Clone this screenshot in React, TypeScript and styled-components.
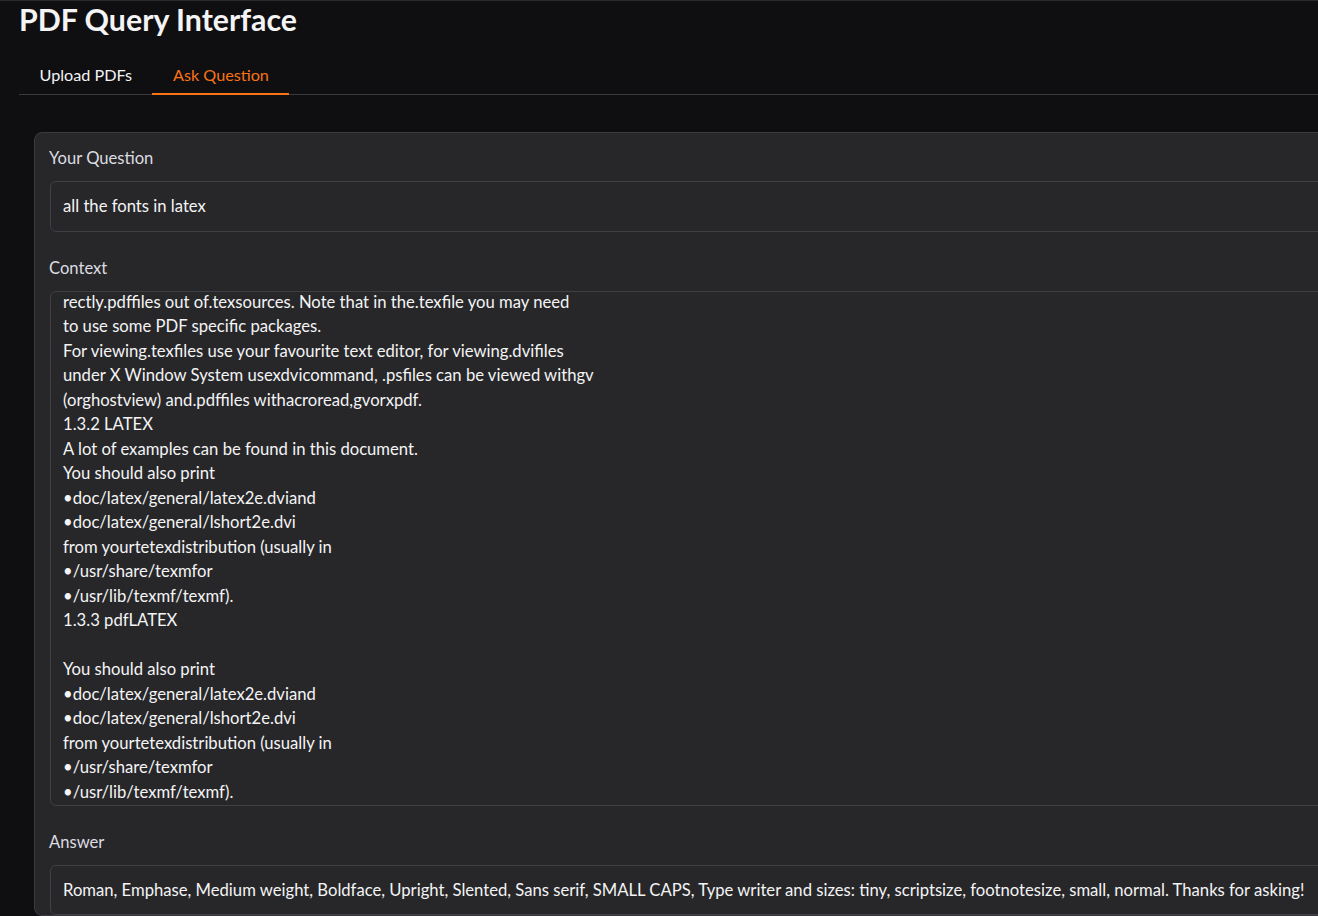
import React from "react";
import styled, { createGlobalStyle } from "styled-components";

const GlobalStyle = createGlobalStyle`
  html, body {
    margin: 0;
    padding: 0;
    background: #0f0f11;
    overflow: hidden;
  }
  body {
    border-top: 1px solid #2a2a2e;
    font-family: Lato, "Noto Sans", sans-serif;
    color: #f4f4f5;
  }
`;

const Page = styled.div`
  width: 1420px;
  padding: 0 0 0 19px;
  box-sizing: border-box;
`;

const Title = styled.h1`
  margin: 0;
  font-size: 30.3px;
  line-height: 36px;
  font-weight: 700;
  color: #f4f4f5;
`;

const TabBar = styled.div`
  display: flex;
  margin-top: 21px;
  border-bottom: 1px solid #3a3a3f;
`;

const Tab = styled.button<{ $active?: boolean }>`
  background: none;
  border: none;
  padding: 0 20.5px 2px;
  height: 37px;
  margin-bottom: -1px;
  font-family: inherit;
  font-size: 16.2px;
  font-weight: 400;
  color: ${(p) => (p.$active ? "#f97316" : "#f4f4f5")};
  border-bottom: 2px solid ${(p) => (p.$active ? "#f97316" : "transparent")};
  cursor: pointer;
`;

const Panel = styled.div`
  margin: 37px 0 0 15px;
  background: #27272a;
  border: 1px solid #3a3a3f;
  border-radius: 8px;
  padding: 15px 14px 0;
  display: flex;
  flex-direction: column;
  gap: 26px;
`;

const Field = styled.div`
  display: flex;
  flex-direction: column;
  gap: 13px;
`;

const Label = styled.div`
  font-size: 16.6px;
  line-height: 20px;
  color: #dcdce0;
`;

const Box = styled.div<{ $height?: number }>`
  margin-left: 1px;
  border: 1px solid #3f3f46;
  border-radius: 6px;
  background: #27272a;
  padding: ${(p) => (p.$height ? "0 12px" : "12px")};
  font-size: 16.65px;
  line-height: 24.5px;
  color: #f4f4f5;
  height: ${(p) => (p.$height ? `${p.$height}px` : "auto")};
  overflow: hidden;
`;

const Scroll = styled.div`
  margin-top: -2px;
  white-space: pre;
`;

const contextLines = [
  "rectly.pdffiles out of.texsources. Note that in the.texfile you may need",
  "to use some PDF specific packages.",
  "For viewing.texfiles use your favourite text editor, for viewing.dvifiles",
  "under X Window System usexdvicommand, .psfiles can be viewed withgv",
  "(orghostview) and.pdffiles withacroread,gvorxpdf.",
  "1.3.2 LATEX",
  "A lot of examples can be found in this document.",
  "You should also print",
  "•doc/latex/general/latex2e.dviand",
  "•doc/latex/general/lshort2e.dvi",
  "from yourtetexdistribution (usually in",
  "•/usr/share/texmfor",
  "•/usr/lib/texmf/texmf).",
  "1.3.3 pdfLATEX",
  "",
  "You should also print",
  "•doc/latex/general/latex2e.dviand",
  "•doc/latex/general/lshort2e.dvi",
  "from yourtetexdistribution (usually in",
  "•/usr/share/texmfor",
  "•/usr/lib/texmf/texmf).",
];

export default function App() {
  return (
    <>
      <GlobalStyle />
      <Page>
        <Title>PDF Query Interface</Title>
        <TabBar>
          <Tab>Upload PDFs</Tab>
          <Tab $active>Ask Question</Tab>
        </TabBar>
        <Panel>
          <Field>
            <Label>Your Question</Label>
            <Box>all the fonts in latex</Box>
          </Field>
          <Field>
            <Label>Context</Label>
            <Box $height={513}>
              <Scroll>{contextLines.join("\n")}</Scroll>
            </Box>
          </Field>
          <Field>
            <Label>Answer</Label>
            <Box>
              Roman, Emphase, Medium weight, Boldface, Upright, Slented, Sans serif, SMALL CAPS, Type writer and sizes: tiny, scriptsize, footnotesize, small, normal. Thanks for asking!
            </Box>
          </Field>
        </Panel>
      </Page>
    </>
  );
}
